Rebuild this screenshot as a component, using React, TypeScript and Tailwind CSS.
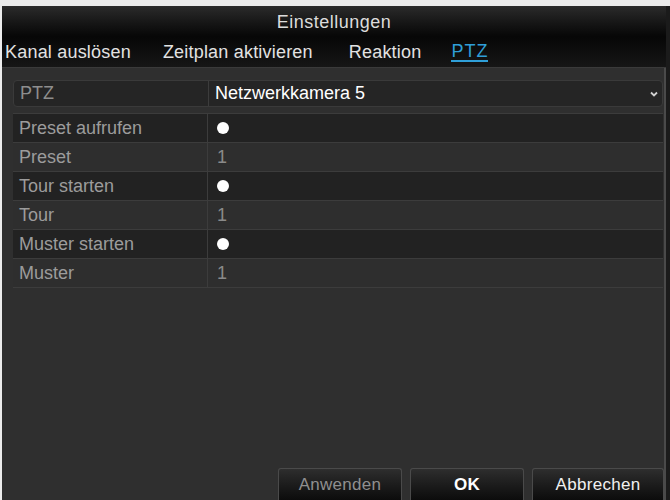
import React from "react"

const rows = [
  { label: "Preset aufrufen", dot: true },
  { label: "Preset", value: "1" },
  { label: "Tour starten", dot: true },
  { label: "Tour", value: "1" },
  { label: "Muster starten", dot: true },
  { label: "Muster", value: "1" },
]

export default function App() {
  return (
    <div
      className="w-[670px] h-[500px] bg-[#ececec] pt-[6px] pl-[2px] overflow-hidden"
      style={{ fontFamily: '"Liberation Sans", Arial, sans-serif' }}
    >
      <div className="h-full flex flex-col bg-[#2f2f2f] border-r-[4px] border-[#1b1b1b]">
        {/* header */}
        <div className="bg-gradient-to-b from-[#2b2b2b] via-[#070707] to-[#161616] border-b border-[#3a3a3a]">
          <div className="h-[31px] flex items-center justify-center text-[18px] tracking-[0.5px] text-[#dcdcdc] pt-[2px]">
            Einstellungen
          </div>
          <div className="h-[30px] flex items-center text-[18px] text-[#e2e2e2] tracking-[0.2px]">
            <span className="pl-[3px]">Kanal auslösen</span>
            <span className="ml-[32px]">Zeitplan aktivieren</span>
            <span className="ml-[36px]">Reaktion</span>
            <span className="ml-[30px] text-[#2f9fd8] tracking-[1px] border-b-2 border-[#2f9fd8] leading-[18px]">
              PTZ
            </span>
          </div>
        </div>

        {/* content */}
        <div className="flex-1 flex flex-col pl-[11px] pr-[1px] pt-[12px] border-r-2 border-[#4a4a4a]">
          <div className="h-[27px] flex rounded-[4px] bg-[#252525] border border-[#3a3a3a] text-[18px]">
            <div className="w-[195px] pl-[6px] flex items-center text-[#8e8e8e] border-r border-[#3c3c3c]">
              PTZ
            </div>
            <div className="flex-1 flex items-center justify-between pl-[6px] pr-[4px]">
              <span className="text-white">Netzwerkkamera 5</span>
              <svg width="8" height="6" viewBox="0 0 8 6">
                <path d="M1 1.5 L4 4.5 L7 1.5" stroke="#d0d0d0" strokeWidth="1.8" fill="none" />
              </svg>
            </div>
          </div>

          <div className="mt-[6px] flex flex-col gap-[1px] bg-[#3c3c3c] border-y border-[#3c3c3c]">
            {rows.map((r) => (
              <div
                key={r.label}
                className={`h-[28px] flex text-[18px] ${
                  r.dot ? "bg-[#222222]" : "bg-[#2e2e2e]"
                }`}
              >
                <div className="w-[195px] pl-[6px] flex items-center text-[#9c9c9c] border-r border-[#3c3c3c]">
                  {r.label}
                </div>
                <div className="flex-1 flex items-center pl-[9px] text-[#8a8a8a]">
                  {r.dot ? (
                    <span className="w-[12px] h-[12px] rounded-full bg-white" />
                  ) : (
                    r.value
                  )}
                </div>
              </div>
            ))}
          </div>

          <div className="flex-1" />

          {/* buttons */}
          <div className="flex justify-end gap-[8px] mr-[-1px]">
            {[
              { t: "Anwenden", c: "text-[#8f8f8f] w-[124px]" },
              { t: "OK", c: "text-white font-bold w-[114px]" },
              { t: "Abbrechen", c: "text-[#f0f0f0] w-[132px]" },
            ].map((b) => (
              <div
                key={b.t}
                className={`h-[32px] flex items-center justify-center rounded-t-[3px] border border-b-0 border-[#4a4a4a] bg-gradient-to-b from-[#2e2e2e] to-[#0c0c0c] text-[17px] tracking-[0.3px] ${b.c}`}
              >
                {b.t}
              </div>
            ))}
          </div>
        </div>
      </div>
    </div>
  )
}
